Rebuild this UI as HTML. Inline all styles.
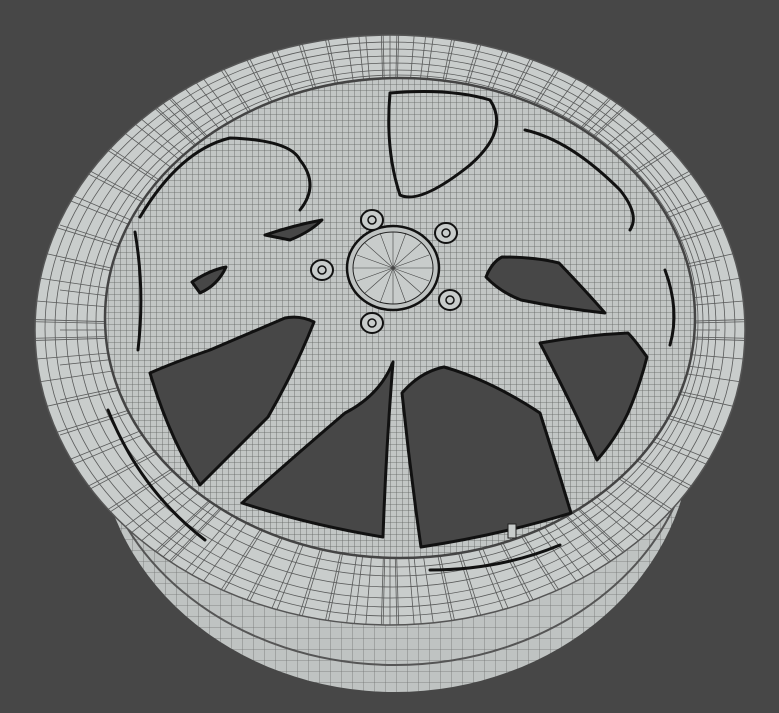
<!DOCTYPE html><html><head><style>html,body{margin:0;padding:0;background:#474747;width:779px;height:713px;overflow:hidden}svg{display:block}</style></head><body>
<svg width="779" height="713" viewBox="0 0 779 713" xmlns="http://www.w3.org/2000/svg">
<defs>
<pattern id="g" width="6" height="6" patternUnits="userSpaceOnUse"><path d="M0 0H6M0 0V6" stroke="#1a1a1a" stroke-width="0.8" opacity="0.6"/></pattern>
<pattern id="g2" width="11" height="11" patternUnits="userSpaceOnUse"><path d="M0 0H11M0 0V11" stroke="#222" stroke-width="0.8" opacity="0.5"/></pattern>
<clipPath id="rimc"><path fill-rule="evenodd" d="M35 330a355 295 0 1 0 710 0a355 295 0 1 0 -710 0ZM105 318a295 240 0 1 0 590 0a295 240 0 1 0 -590 0Z"/></clipPath>
</defs>
<rect width="779" height="713" fill="#474747"/>
<ellipse cx="395" cy="430" rx="297" ry="262" fill="#bfc3c2"/>
<ellipse cx="395" cy="430" rx="297" ry="262" fill="url(#g2)"/>
<ellipse cx="395" cy="415" rx="300" ry="250" fill="none" stroke="#555" stroke-width="2"/>
<ellipse cx="390" cy="330" rx="355" ry="295" fill="#c9cdcc"/>
<g clip-path="url(#rimc)" stroke="#2a2a2a" stroke-width="0.8" fill="none" opacity="0.7">
<ellipse cx="390" cy="329" rx="345" ry="287"/><ellipse cx="390" cy="328" rx="335" ry="279"/>
<ellipse cx="391" cy="327" rx="325" ry="271"/><ellipse cx="393" cy="325" rx="316" ry="262"/>
<ellipse cx="395" cy="323" rx="308" ry="253"/><ellipse cx="397" cy="321" rx="301" ry="246"/>
<g id="rad">
<path d="M390 330L390 0M390 330L460 0M390 330L530 0M390 330L600 0M390 330L670 0M390 330L740 0M390 330L320 0M390 330L250 0M390 330L180 0M390 330L110 0M390 330L40 0"/>
<path d="M390 330L430 0M390 330L495 0M390 330L565 0M390 330L635 0M390 330L705 0M390 330L355 0M390 330L285 0M390 330L215 0M390 330L145 0M390 330L75 0"/>
</g>
<use href="#rad" transform="rotate(180 390 330)"/>
<use href="#rad" transform="rotate(90 390 330)"/>
<use href="#rad" transform="rotate(-90 390 330)"/>
<use href="#rad" transform="rotate(45 390 330)"/>
<use href="#rad" transform="rotate(-45 390 330)"/>
<use href="#rad" transform="rotate(135 390 330)"/>
<use href="#rad" transform="rotate(-135 390 330)"/>
</g>
<ellipse cx="390" cy="330" rx="355" ry="295" fill="none" stroke="#555" stroke-width="1.5"/>
<ellipse cx="400" cy="318" rx="295" ry="240" fill="#c2c6c5"/>
<ellipse cx="400" cy="318" rx="295" ry="240" fill="url(#g)"/>
<ellipse cx="400" cy="318" rx="295" ry="240" fill="none" stroke="#444" stroke-width="2.5"/>
<g fill="#474747" stroke="#111" stroke-width="3" stroke-linejoin="round">
<path d="M150 373Q170 440 200 485Q235 450 268 417Q295 370 314 322Q300 315 285 318Q250 333 210 350Q175 362 150 373Z"/>
<path d="M345 413Q290 460 242 503Q310 525 383 537Q386 450 393 362Q380 395 345 413Z"/>
<path d="M402 393Q410 470 421 547Q500 535 571 513Q555 460 540 413Q490 380 444 367Q420 372 402 393Z"/>
<path d="M540 343Q570 400 597 460Q615 440 628 413Q640 385 647 357Q635 340 628 333Q585 335 540 343Z"/>
<path d="M486 277Q492 262 502 257Q535 257 559 263Q585 290 605 313Q560 308 521 300Q500 292 486 277Z"/>
<path d="M192 282Q210 270 226 267Q218 285 200 293Z"/>
<path d="M265 235Q295 225 322 220Q310 232 290 240Z"/>
</g>
<g fill="none" stroke="#111" stroke-width="3" stroke-linecap="round">
<path d="M140 217Q180 150 230 138Q290 140 300 160Q320 185 300 210"/>
<path d="M390 93Q450 88 490 100Q510 130 470 165Q420 205 400 195Q385 150 390 93"/>
<path d="M525 130Q570 140 620 190Q640 215 630 230"/>
<path d="M135 232Q145 290 138 350"/>
<path d="M665 270Q680 310 670 345"/>
<path d="M108 410Q140 490 205 540"/>
<path d="M430 570Q500 570 560 545"/>
</g>
<ellipse cx="393" cy="268" rx="46" ry="42" fill="#bfc3c2" stroke="#111" stroke-width="2.5"/>
<ellipse cx="393" cy="268" rx="40" ry="36" fill="#c8cccb" stroke="#222" stroke-width="1"/>
<g stroke="#222" stroke-width="0.6" opacity="0.8">
<path d="M353 268H433M393 232V304M365 243L421 293M365 293L421 243M357 255L429 281M357 281L429 255M380 233L406 303M406 233L380 303"/>
</g>
<g fill="#c8cccb" stroke="#111" stroke-width="2">
<ellipse cx="372" cy="220" rx="11" ry="10"/><ellipse cx="446" cy="233" rx="11" ry="10"/>
<ellipse cx="322" cy="270" rx="11" ry="10"/><ellipse cx="450" cy="300" rx="11" ry="10"/>
<ellipse cx="372" cy="323" rx="11" ry="10"/>
</g>
<g fill="none" stroke="#111" stroke-width="1.5">
<circle cx="372" cy="220" r="4"/><circle cx="446" cy="233" r="4"/><circle cx="322" cy="270" r="4"/><circle cx="450" cy="300" r="4"/><circle cx="372" cy="323" r="4"/>
</g>
<rect x="508" y="524" width="8" height="14" fill="#c8cccb" stroke="#222"/>
</svg>
</body></html>
